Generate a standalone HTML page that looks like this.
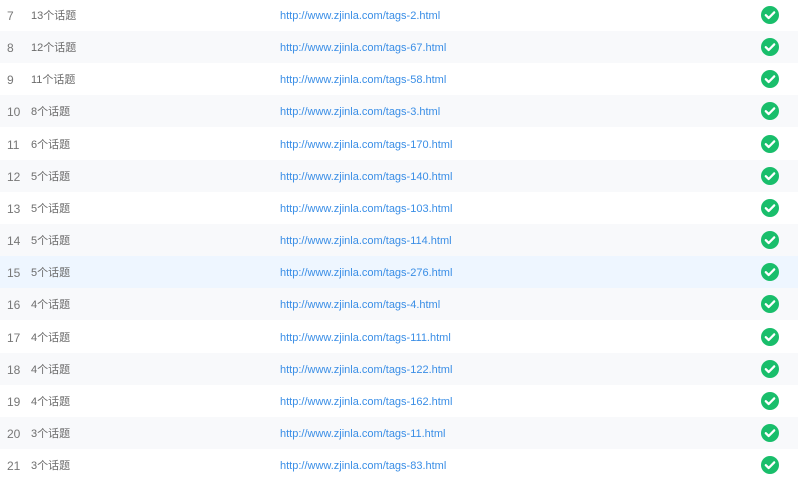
<!DOCTYPE html><html><head><meta charset="utf-8"><style>
body{margin:0;width:798px;height:482px;overflow:hidden;background:#fff;font-family:"Liberation Sans","Noto Sans CJK SC",sans-serif;font-size:12px;color:#666}
.r{position:absolute;left:0;width:798px;height:32px;line-height:32px}
.r.s{background:#f8f9fb}.r.h{background:#eef6ff}
.n{position:absolute;left:7px;top:1px;color:#777}.t{position:absolute;left:31px;top:1px;font-size:11px;color:#6b6b6b}
.u{position:absolute;left:280px;top:1px;color:#3a8ee6;font-size:11px}
svg{position:absolute;left:761px;top:7px}
</style></head><body>
<div id="c"></div>
<script>
var d=[[7,13,2],[8,12,67],[9,11,58],[10,8,3],[11,6,170],[12,5,140],[13,5,103],[14,5,114],[15,5,276],[16,4,4],[17,4,111],[18,4,122],[19,4,162],[20,3,11],[21,3,83]];
var h='';d.forEach(function(x,i){var cls=i==8?'h':(i%2?'s':'');h+='<div class="r '+cls+'" style="top:'+(i*32.15-1)+'px"><span class="n">'+x[0]+'</span><span class="t">'+x[1]+'个话题</span><span class="u">http://www.zjinla.com/tags-'+x[2]+'.html</span><svg width="18" height="18" viewBox="0 0 18 18"><circle cx="9" cy="9" r="9" fill="#19be6b"/><path d="M4.8 9.2l2.9 2.8 5.5-5.6" stroke="#fff" stroke-width="2.3" fill="none" stroke-linecap="round" stroke-linejoin="round"/></svg></div>'});
document.getElementById('c').innerHTML=h;
</script>
</body></html>
